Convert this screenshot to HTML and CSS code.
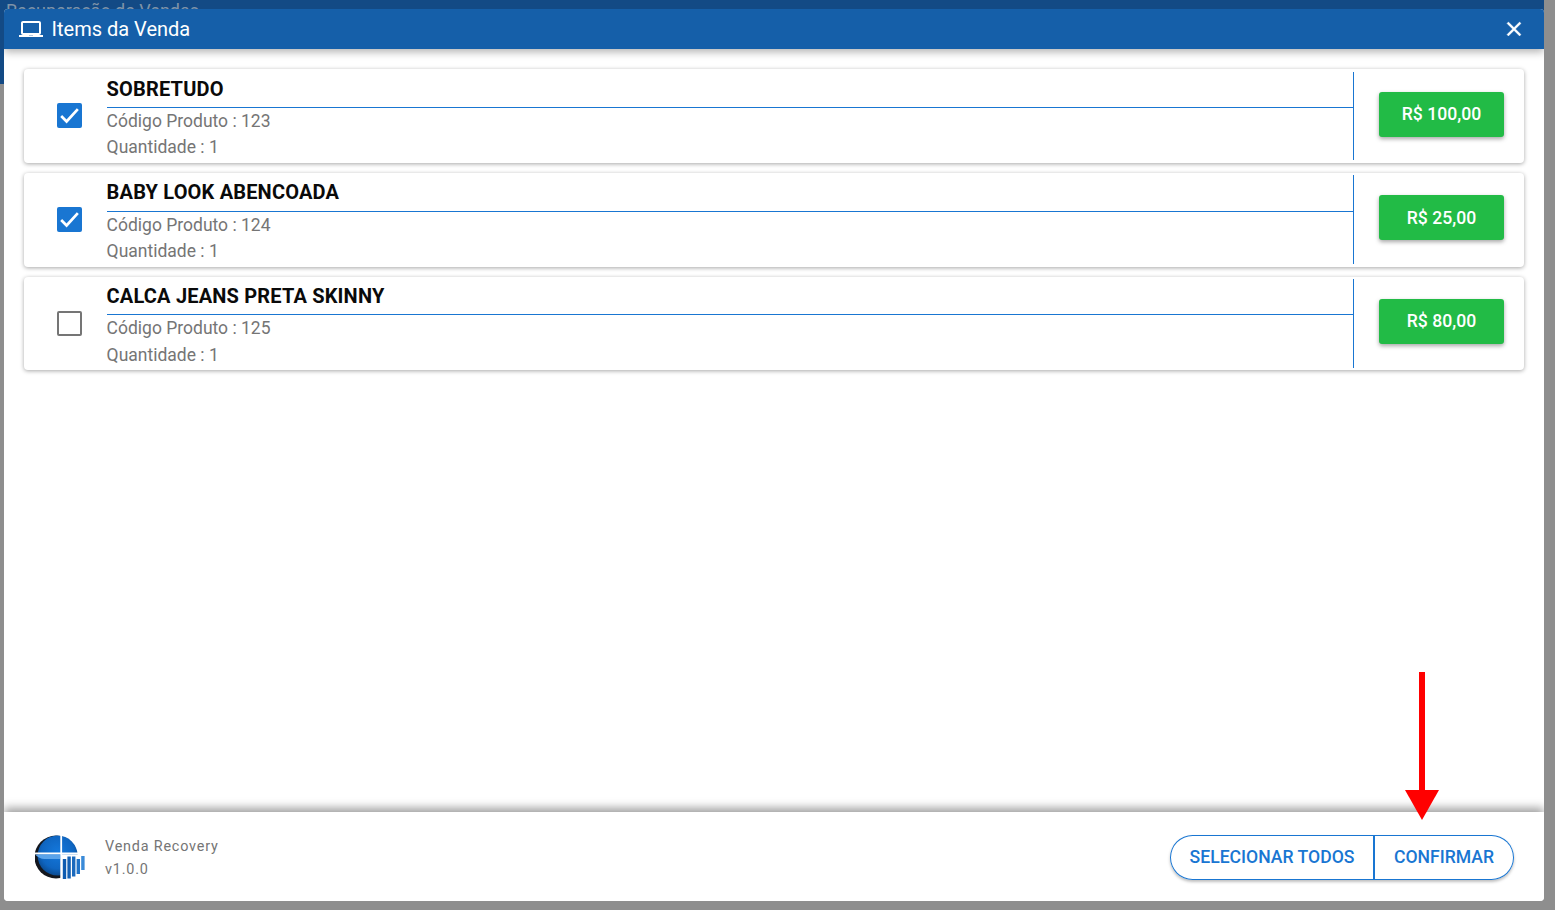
FILE: index.html
```html
<!DOCTYPE html>
<html lang="pt-BR">
<head>
<meta charset="utf-8">
<title>Items da Venda</title>
<link rel="stylesheet" href="styles.css">
</head>
<body>
<div class="app-bar"><span class="app-title">Recuperação de Vendas</span></div>
<div class="dialog">
  <header class="dialog-head">
    <svg class="head-icon" viewBox="0 0 24 24"><path fill="#fff" fill-rule="evenodd" d="M20 18c1.1 0 1.99-.9 1.99-2L22 6c0-1.1-.9-2-2-2H4c-1.1 0-2 .9-2 2v10c0 1.1.9 2 2 2H0v2h24v-2h-4zM4 6h16v10H4V6z"/><rect x="10" y="18" width="4" height=".8" fill="#9fb9d6"/></svg>
    <span class="head-title">Items da Venda</span>
    <svg class="close-icon" viewBox="0 0 24 24"><path fill="#fff" stroke="#fff" stroke-width=".4" d="M19 6.41 17.59 5 12 10.59 6.41 5 5 6.41 10.59 12 5 17.59 6.41 19 12 13.41 17.59 19 19 17.59 13.41 12z"/></svg>
  </header>
  <main class="dialog-body">
    <article class="item">
      <div class="check-col"><span class="check on"><svg viewBox="0 0 24 24"><path fill="none" stroke="#fff" stroke-width="2.6" d="M4 12.5l5.2 5.2L20 5.8"/></svg></span></div>
      <div class="info">
        <div class="name">SOBRETUDO</div>
        <div class="meta">Código Produto : 123</div>
        <div class="meta">Quantidade : 1</div>
      </div>
      <div class="price-col"><button class="price">R$ 100,00</button></div>
    </article>
    <article class="item">
      <div class="check-col"><span class="check on"><svg viewBox="0 0 24 24"><path fill="none" stroke="#fff" stroke-width="2.6" d="M4 12.5l5.2 5.2L20 5.8"/></svg></span></div>
      <div class="info">
        <div class="name">BABY LOOK ABENCOADA</div>
        <div class="meta">Código Produto : 124</div>
        <div class="meta">Quantidade : 1</div>
      </div>
      <div class="price-col"><button class="price">R$ 25,00</button></div>
    </article>
    <article class="item">
      <div class="check-col"><span class="check"></span></div>
      <div class="info">
        <div class="name">CALCA JEANS PRETA SKINNY</div>
        <div class="meta">Código Produto : 125</div>
        <div class="meta">Quantidade : 1</div>
      </div>
      <div class="price-col"><button class="price">R$ 80,00</button></div>
    </article>
  </main>
  <footer class="dialog-foot">
    <svg class="logo" viewBox="0 0 50 44">
      <defs>
        <radialGradient id="g" cx="50%" cy="42%" r="58%"><stop offset="0" stop-color="#1478dc"/><stop offset="0.7" stop-color="#0f66c2"/><stop offset="1" stop-color="#0a4a90"/></radialGradient>
      </defs>
      <circle cx="21" cy="22" r="21.5" fill="#14171e"/>
      <circle cx="22.6" cy="20.6" r="20" fill="url(#g)"/>
      <path fill="#5aa3ea" d="M0 19.5H25V24H9.5C6 24 2.5 22 0 19.5z"/>
      <rect x="25.3" y="0" width="1.8" height="44" fill="#fff"/>
      <rect x="0" y="17.5" width="50" height="1.8" fill="#fff"/>
      <rect x="27" y="19.3" width="23" height="24.7" fill="#fff"/>
      <rect x="27.8" y="24" width="3.4" height="20" fill="#0d5bb0"/>
      <rect x="32.4" y="21.5" width="3.4" height="22" fill="#1461b4"/>
      <rect x="37" y="21.5" width="3.4" height="20" fill="#1a69bd"/>
      <rect x="41.6" y="24" width="3.4" height="15" fill="#2073c8"/>
      <rect x="46.2" y="21" width="3.4" height="14" fill="#3a8ad8"/>
    </svg>
    <div class="brand">
      <div>Venda Recovery</div>
      <div>v1.0.0</div>
    </div>
    <div class="actions">
      <button class="act first">SELECIONAR TODOS</button>
      <button class="act last">CONFIRMAR</button>
    </div>
  </footer>
</div>
<div class="arrow"><span class="shaft"></span><span class="tip"></span></div>
</body>
</html>
```
FILE: styles.css
```css
* { box-sizing: border-box; }
html, body { margin: 0; height: 100%; overflow: hidden; }
body { background: #8e8e8e; font-family: Roboto, "Liberation Sans", sans-serif; position: relative; }

.app-bar { width: 1544px; height: 84px; background: #134a85; padding: 0 6px; }
.app-title { font-size: 18px; line-height: 20px; color: #7f93a8; display: block; padding-top: 1px; }

.dialog {
  position: absolute; left: 4px; top: 9px; width: 1540px; height: 892px;
  background: #fff; border-radius: 4px; overflow: hidden;
  display: flex; flex-direction: column;
}
.dialog-head {
  height: 40px; flex: none; background: #155fa9; color: #fff;
  display: flex; align-items: center; padding: 0 19px 0 15px;
  box-shadow: 0 3px 8px rgba(0,0,0,.3); position: relative; z-index: 1;
}
.head-icon { width: 24px; height: 24px; margin-right: 8.6px; margin-bottom: 1px; }
.head-title { font-size: 20px; flex: 1; }
.close-icon { width: 24px; height: 24px; margin-right: -1px; }

.dialog-body { flex: 1; padding: 20px 20px 0; display: flex; flex-direction: column; gap: 10px; }

.item {
  height: 93.75px; flex: none; background: #fff; border-radius: 4px;
  box-shadow: 0 1px 4px rgba(0,0,0,.35);
  display: flex; align-items: stretch;
}
.check-col { width: 82.6px; flex: none; display: flex; align-items: center; padding-left: 33px; }
.check { width: 25px; height: 25px; border: 2px solid #757575; border-radius: 2px; display: block; }
.check.on { background: #1976d2; border: 0; }
.check svg { display: block; width: 25px; height: 25px; }

.info { flex: 1; padding-top: 3.6px; margin-bottom: 3px; }
.name {
  font-size: 20px; font-weight: 700; letter-spacing: .18px; line-height: 32.4px; height: 35.4px; color: #0a0a0a;
  border-bottom: 1px solid #1976d2;
}
.meta { font-size: 17.5px; line-height: 26.4px; color: #757575; }

.price-col {
  width: 171px; flex: none; margin: 2.6px 0; border-left: 1px solid #1976d2;
  display: flex; align-items: center; padding-left: 25px;
}
.price {
  width: 125px; height: 45px; border: 0; border-radius: 3px; background: #22bb46; color: #fff;
  font: 500 17.6px Roboto, sans-serif; padding: 0 0 .5px; margin-bottom: 3.6px;
  box-shadow: 0 2px 4px rgba(0,0,0,.35);
}

.dialog-foot {
  height: 89px; flex: none; background: #fff; display: flex; align-items: center;
  padding: 0 30px 0 31px; box-shadow: 0 -4px 9px rgba(0,0,0,.38); position: relative;
}
.logo { width: 50px; height: 44px; margin-right: 20px; }
.brand { font-size: 14.4px; line-height: 23px; letter-spacing: .8px; color: #757575; flex: 1; padding-top: 2px; }
.actions { display: flex; border-radius: 23px; box-shadow: 0 2px 3px rgba(0,0,0,.25); margin-top: 1px; }
.act {
  height: 45px; background: #fff; border: 1px solid #1976d2; color: #1976d2;
  font: 500 17.6px Roboto, sans-serif; padding: 0;
}
.act.first { width: 205px; border-radius: 23px 0 0 23px; border-right: 2px solid #1976d2; }
.act.last { width: 139px; border-radius: 0 23px 23px 0; border-left: 0; }

.arrow { position: absolute; left: 1405px; top: 672px; width: 34px; display: flex; flex-direction: column; align-items: center; }
.shaft { width: 6px; height: 118px; background: #f00; display: block; }
.tip { width: 0; height: 0; border-left: 17px solid transparent; border-right: 17px solid transparent; border-top: 30px solid #f00; display: block; }
```
